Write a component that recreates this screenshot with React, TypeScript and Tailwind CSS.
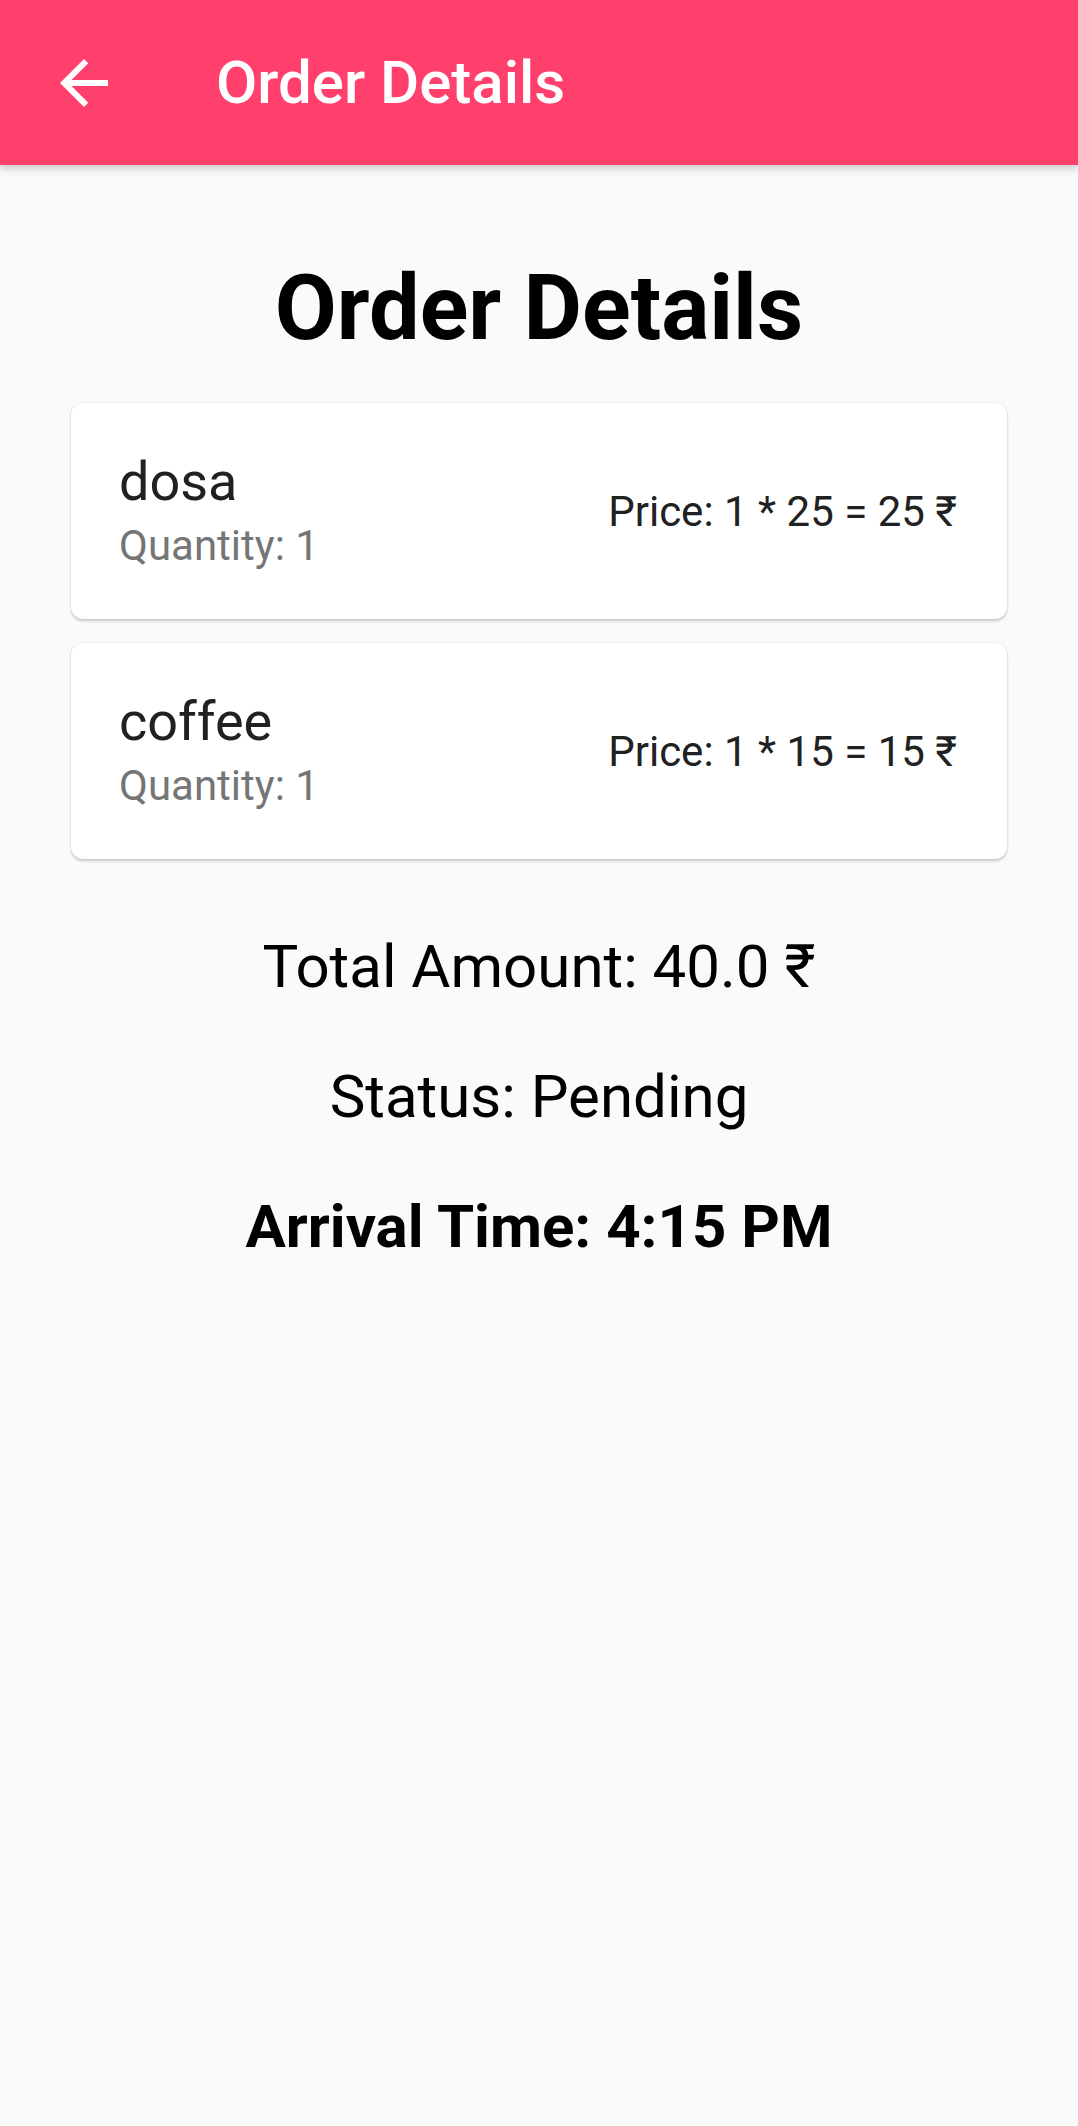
const items = [
  { name: "dosa", qty: 1, price: 25 },
  { name: "coffee", qty: 1, price: 15 },
];

function BackArrow() {
  return (
    <svg viewBox="0 0 24 24" className="w-[72px] h-[72px]" fill="#ffffff">
      <path d="M20 11H7.83l5.59-5.59L12 4l-8 8 8 8 1.41-1.41L7.83 13H20v-2z" />
    </svg>
  );
}

export default function App() {
  const total = items.reduce((sum, it) => sum + it.qty * it.price, 0);

  return (
    <div
      className="min-h-screen bg-[#fafafa]"
      style={{ fontFamily: "Roboto, 'Noto Sans', sans-serif" }}
    >
      {/* app bar */}
      <header className="relative z-10 h-[165px] bg-[#ff3f6c] flex items-center shadow-[0_3px_8px_rgba(0,0,0,0.22)]">
        <button className="w-[168px] h-full flex items-center justify-center">
          <BackArrow />
        </button>
        <h1 className="ml-[48px] text-white text-[60px] font-medium leading-[70px]">Order Details</h1>
      </header>

      <main className="px-[60px] pt-[91px]">
        <h2 className="text-center text-black text-[90px] font-bold leading-[105px]">Order Details</h2>

        <div className="mt-[42px] flex flex-col gap-[24px]">
          {items.map((it) => (
            <div
              key={it.name}
              className="mx-[11px] h-[216px] bg-white rounded-[12px] shadow-[0_2px_3px_rgba(0,0,0,0.2),0_0_2px_rgba(0,0,0,0.08)] flex items-center justify-between pl-[48px] pr-[50px]"
            >
              <div className="flex flex-col pt-[6px]">
                <span className="text-[54px] leading-[63px] text-[#212121]">{it.name}</span>
                <span className="text-[42px] leading-[65px] text-[#757575]">Quantity: {it.qty}</span>
              </div>
              <span className="text-[42px] leading-[49px] text-[#212121]">
                Price: {it.qty} * {it.price} = {it.qty * it.price} ₹
              </span>
            </div>
          ))}
        </div>

        <div className="mt-[73px] flex flex-col items-center gap-[60px] text-black text-[60px] leading-[70px]">
          <p>Total Amount: {total.toFixed(1)} ₹</p>
          <p>Status: Pending</p>
          <p className="font-bold">Arrival Time: 4:15 PM</p>
        </div>
      </main>
    </div>
  );
}
